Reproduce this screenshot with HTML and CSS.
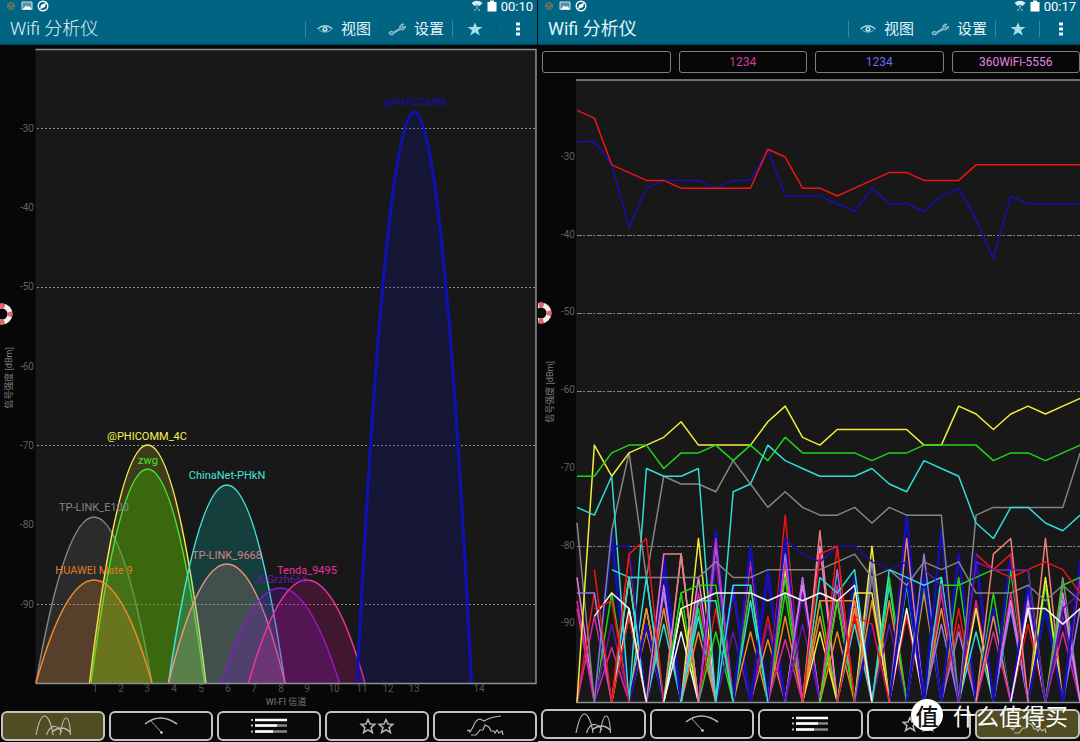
FILE: index.html
```html
<!DOCTYPE html>
<html lang="zh-CN">
<head>
<meta charset="utf-8">
<title>Wifi 分析仪</title>
<link rel="stylesheet" href="styles.css">
</head>
<body>
<svg class="defs" aria-hidden="true">
  <symbol id="i-ring" viewBox="0 0 12 12"><circle cx="6" cy="6" r="3.500" fill="#3c5f5c" stroke="#6d8278"/><path d="M3.500 5.500Q6 8.500 8.500 5.500" fill="none" stroke="#8f9a84"/></symbol>
  <symbol id="i-pic" viewBox="0 0 12 12"><path d="M1 2h10v7.500H1z" fill="#5d8ea5" stroke="#c5e2ec"/><path d="M2 9l3-3.500 2 1.500 1.500-1L10.500 9z" fill="#fff"/></symbol>
  <symbol id="i-nav" viewBox="0 0 12 12"><circle cx="6" cy="6" r="4.800" fill="none" stroke="#fff" stroke-width="1.400"/><path d="M9.300 2.600L8 7 3 9.200 4 5z" fill="#fff"/></symbol>
  <symbol id="i-wifi" viewBox="0 0 12 12"><path d="M.5 3Q6-1.500 11.500 3L8.500 6 6 4.500 3.500 6z" fill="#d8eef5"/><path d="M6 5v4M4 9v2M8 9v2" stroke="#b5d6e2"/></symbol>
  <symbol id="i-bat" viewBox="0 0 10 12"><path d="M3 .5h4v1.500h2.500v9.500h-9V2H3z" fill="#fff"/></symbol>
  <symbol id="i-eye" viewBox="0 0 16 12"><path d="M.5 6Q8-.5 15.500 6" fill="none" stroke="#a9d2df" stroke-width="1.300"/><path d="M2 7Q8 11.500 14 7" fill="none" stroke="#7cb0c0"/><circle cx="8" cy="6.300" r="2.500" fill="#c5e4ee"/><circle cx="8" cy="6" r="1" fill="#0a5068"/></symbol>
  <symbol id="i-wrench" viewBox="0 0 20 14"><path d="M2 12.500L1 10.500 3.500 9 6 10 13.500 5.500 13 3 15.500 1 17.500 1 15.500 3 16.500 5 19.500 3.500 19 5.500 16.500 7.500 13.500 7 6.500 11.200 5.500 13z" fill="#4f8b9d" stroke="#b9dde8" stroke-width=".9"/></symbol>
  <symbol id="i-star" viewBox="0 0 16 14"><path d="M8 .5l2 4.500h5.500L11 8.300l1.800 5.200L8 10.500l-4.800 3L5 8.300.5 5H6z" fill="#a9dcea"/></symbol>
  <symbol id="i-dots" viewBox="0 0 4 14"><path d="M0 .5h4v3H0zM0 5.500h4v3H0zM0 10.500h4v3H0z" fill="#f2fbff"/></symbol>
  <symbol id="i-graph" viewBox="0 0 38 22"><path d="M2 20C5 5 8 1 10.500 1S17 6 19 20M12.500 20C15 13 18 11 21 11.500S27 15 28 17M26 20C28 8 30 3 32 3S36 8 36.500 20M18 17Q28 9 36 17"/></symbol>
  <symbol id="i-meter" viewBox="0 0 38 22"><path d="M3 9Q18-3 35 9" stroke-width="1.600"/><path d="M9 6L19 17" stroke-width=".9"/><circle cx="19.500" cy="17.500" r="1.300" fill="#ddd" stroke="none"/></symbol>
  <symbol id="i-list" viewBox="0 0 38 22"><path d="M1 5h2M1 10.500h2M1 16.500h2" stroke-width="2"/><path d="M5 10.500h32M5 16.500h32" stroke="#888" stroke-width="2.400"/><path d="M5 5h32M5 10.500h22M5 16.500h18" stroke="#fff" stroke-width="2.400"/></symbol>
  <symbol id="i-stars" viewBox="0 0 38 22"><path d="M10 4.500l2 4.500 4.800.3-3.800 3.300 1.500 4.900-4.500-2.700-4.500 2.700L7 12.600 3.200 9.300 8 9zM28 4.500l2 4.500 4.800.3-3.800 3.300 1.500 4.900-4.500-2.700-4.500 2.700 1.500-4.900-3.800-3.300L26 9z" stroke-width="1.500"/></symbol>
  <symbol id="i-time" viewBox="0 0 38 22"><path d="M1 16l2-1 1 2 3-5q3-8 7-8l4 2q6-4 17-5"/><path d="M5 20h5l4-5 3 0 2-5 4 2 2 4h3l1 2 2-3 2 3 3-2 1 4"/></symbol>
  <symbol id="i-buoy" viewBox="0 0 24 24"><circle cx="12" cy="12" r="8" fill="none" stroke="#f6eeee" stroke-width="5"/><circle cx="12" cy="12" r="8" fill="none" stroke="#e2646e" stroke-width="5" stroke-dasharray="5 7.560" stroke-dashoffset="2.500"/></symbol>
</svg>

<main class="screens">
  <section class="phone">
    <header class="top">
      <div class="status">
        <svg class="s-icon"><use href="#i-ring"/></svg><svg class="s-icon"><use href="#i-pic"/></svg><svg class="s-icon"><use href="#i-nav"/></svg>
        <span class="grow"></span>
        <svg class="s-icon"><use href="#i-wifi"/></svg><svg class="s-bat"><use href="#i-bat"/></svg><time>00:10</time>
      </div>
      <div class="bar">
        <h1>Wifi 分析仪</h1>
        <button class="act view"><svg class="eye"><use href="#i-eye"/></svg>视图</button>
        <button class="act faint"><svg class="wrench"><use href="#i-wrench"/></svg>设置</button>
        <button class="act fav" aria-label="收藏"><svg class="star"><use href="#i-star"/></svg></button>
        <button class="act faint more" aria-label="更多"><svg class="dots"><use href="#i-dots"/></svg></button>
      </div>
    </header>
    <svg class="chart" viewBox="0 45 537 665" role="img" aria-label="Wi-Fi 信道图">
      <rect x="35.500" y="49" width="500.500" height="634.500" fill="#181818"/>
      <g class="grid">
        <path d="M37 128.500H535M37 287.500H535M37 445.500H535M37 604.500H535"/>
      </g>
      <g class="curves">
        <path stroke="#858585" fill="#8585852e" d="M36 683Q94 351 152 683"/>
        <path stroke="#f6f050" fill="#e8e03030" d="M89.500 683Q147.500 207 206 683"/>
        <path stroke="#42ea2c" fill="#36a00070" d="M91 683Q147.500 255 204.500 683"/>
        <path stroke="#f08a2c" fill="#f08a2c38" d="M36 683Q94 477 152 683"/>
        <path stroke="#48e2dc" fill="#0cc8c438" d="M168.500 683Q227 287 285 683"/>
        <path stroke="#f09088" fill="#e0908838" d="M168.500 683Q227 445 285 683"/>
        <path stroke="#861cc8" fill="#7a10d040" d="M221.500 683Q280 493 339.500 683"/>
        <path stroke="#f0349c" fill="#d0148838" d="M248.500 683Q307 477 365 683"/>
        <path stroke="#1010b8" stroke-width="3" fill="#1010c030" d="M357 683Q414.500-459 471.500 683"/>
      </g>
      <path class="frame" d="M35.500 49.500H536V683.500H35.500"/>
      <g class="names">
        <text x="147" y="440" fill="#f6f050">@PHICOMM_4C</text>
        <text x="148" y="464" fill="#42ea2c">zwg</text>
        <text x="94" y="511" fill="#858585">TP-LINK_E100</text>
        <text x="94" y="574" fill="#e07c20">HUAWEI Mate 9</text>
        <text x="227" y="479" fill="#48e2dc">ChinaNet-PHkN</text>
        <text x="227" y="559" fill="#d88480">TP-LINK_9668</text>
        <text x="281" y="583" fill="#6518b0">JCGrzh666</text>
        <text x="307" y="574" fill="#e8349c">Tenda_9495</text>
        <text x="415" y="106" fill="#1212a8">@PHICOMM</text>
      </g>
      <g class="ticks end">
        <text x="34" y="132">-30</text><text x="34" y="211">-40</text><text x="34" y="290">-50</text><text x="34" y="370">-60</text><text x="34" y="449">-70</text><text x="34" y="528">-80</text><text x="34" y="608">-90</text>
      </g>
      <g class="ticks">
        <text x="95" y="692">1</text><text x="121" y="692">2</text><text x="147" y="692">3</text><text x="174" y="692">4</text><text x="201" y="692">5</text><text x="228" y="692">6</text><text x="254" y="692">7</text><text x="281" y="692">8</text><text x="307" y="692">9</text><text x="334" y="692">10</text><text x="362" y="692">11</text><text x="388" y="692">12</text><text x="414" y="692">13</text><text x="479" y="692">14</text>
        <text x="286" y="705" class="lit">WI-FI 信道</text>
        <text transform="translate(12 378) rotate(-90)" class="lit">信号强度 [dBm]</text>
      </g>
      <use href="#i-buoy" x="-10" y="302" width="24" height="24"/>
    </svg>
    <nav class="tabs">
      <button class="tab on" aria-label="信道图"><svg><use href="#i-graph"/></svg></button>
      <button class="tab" aria-label="信号计"><svg><use href="#i-meter"/></svg></button>
      <button class="tab" aria-label="列表"><svg><use href="#i-list"/></svg></button>
      <button class="tab" aria-label="评分"><svg><use href="#i-stars"/></svg></button>
      <button class="tab" aria-label="时间图"><svg><use href="#i-time"/></svg></button>
    </nav>
  </section>

  <section class="phone second">
    <header class="top">
      <div class="status">
        <svg class="s-icon"><use href="#i-ring"/></svg><svg class="s-icon"><use href="#i-pic"/></svg><svg class="s-icon"><use href="#i-nav"/></svg>
        <span class="grow"></span>
        <svg class="s-icon"><use href="#i-wifi"/></svg><svg class="s-bat"><use href="#i-bat"/></svg><time>00:17</time>
      </div>
      <div class="bar">
        <h1>Wifi 分析仪</h1>
        <button class="act view"><svg class="eye"><use href="#i-eye"/></svg>视图</button>
        <button class="act none"><svg class="wrench"><use href="#i-wrench"/></svg>设置</button>
        <button class="act fav" aria-label="收藏"><svg class="star"><use href="#i-star"/></svg></button>
        <button class="act more" aria-label="更多"><svg class="dots"><use href="#i-dots"/></svg></button>
      </div>
    </header>
    <div class="legend">
      <button class="chip" aria-label="空"></button>
      <button class="chip magenta">1234</button>
      <button class="chip blue">1234</button>
      <button class="chip pink">360WiFi-5556</button>
    </div>
    <svg class="chart" viewBox="538 78 542 630" role="img" aria-label="信号时间图">
      <rect x="576" y="80" width="504" height="622" fill="#181818"/>
      <g class="grid dense">
        <path d="M577 235.500H1080M577 313.500H1080M577 391.500H1080M577 546.500H1080"/>
      </g>
      <g id="lines" class="lines"></g>
      <path class="frame" d="M576 80H1080M576 702.500H1080"/>
      <g class="ticks end">
        <text x="575" y="160">-30</text><text x="575" y="238">-40</text><text x="575" y="315">-50</text><text x="575" y="393">-60</text><text x="575" y="471">-70</text><text x="575" y="549">-80</text><text x="575" y="626">-90</text>
      </g>
      <g class="ticks"><text transform="translate(553 392) rotate(-90)" class="lit">信号强度 [dBm]</text></g>
      <use href="#i-buoy" x="529" y="301" width="24" height="24"/>
    </svg>
    <nav class="tabs">
      <button class="tab" aria-label="信道图"><svg><use href="#i-graph"/></svg></button>
      <button class="tab" aria-label="信号计"><svg><use href="#i-meter"/></svg></button>
      <button class="tab" aria-label="列表"><svg><use href="#i-list"/></svg></button>
      <button class="tab" aria-label="评分"><svg><use href="#i-stars"/></svg></button>
      <button class="tab on" aria-label="时间图"><svg><use href="#i-time"/></svg></button>
    </nav>
    <div class="mark"><span class="seal">值</span><span>什么值得买</span></div>
  </section>
</main>
<script src="lines.js"></script>
</body>
</html>
```
FILE: styles.css
```css
* { box-sizing: border-box; }
body {
  margin: 0;
  background: #070707;
  font-family: Roboto, "Noto Sans CJK SC", sans-serif;
}
.defs { position: absolute; width: 0; height: 0; }
.screens {
  display: grid;
  grid-template-columns: 537fr 542fr;
  gap: 1px;
}
.phone {
  position: relative;
  display: flex;
  flex-direction: column;
  min-width: 0;
  overflow: hidden;
}
.second { border-bottom: 1px solid #d8d0d0; }
button {
  margin: 0;
  padding: 0;
  border: 0;
  background: none;
  color: inherit;
  font: inherit;
}

.top {
  height: 45px;
  background: linear-gradient(#006482 94%, #004a62);
  color: #e2f4fa;
}
.status {
  display: flex;
  align-items: flex-start;
  gap: 4px;
  height: 13px;
  padding: 0 4px 0 5px;
}
.s-icon { width: 12px; height: 12px; }
.s-bat { width: 10px; height: 12px; }
.grow { flex: 1; }
time { font-size: 13px; line-height: 15px; margin-top: -1px; color: #fff; }
.bar {
  display: flex;
  align-items: center;
  height: 32px;
  padding-left: 10px;
}
h1 {
  flex: 1;
  margin: 0;
  font-size: 18px;
  font-weight: 300;
  line-height: 24px;
}
.second h1 { font-weight: 400; }
.act {
  display: flex;
  align-items: center;
  gap: 8px;
  height: 16px;
  padding: 0 8px 0 7px;
  border-left: 1px solid #3a88a0;
  font-size: 15px;
  line-height: 16px;
}
.view { padding: 0 9px 0 11px; }
.faint { border-color: #0d566e; }
.none { border-color: transparent; }
.fav { padding: 0 13px 0 14px; }
.more { padding: 0 17px 0 19px; }
.eye { width: 16px; height: 12px; }
.wrench { width: 18px; height: 13px; }
.star { width: 16px; height: 14px; }
.dots { width: 4px; height: 14px; }

.chart { display: block; width: 100%; height: auto; overflow: hidden; }
.grid { stroke: #8a8a8a; stroke-width: 1; stroke-dasharray: 2 2; }
.dense { stroke-dasharray: 5 1 2 2; stroke: #808080; }
.curves path { stroke-linejoin: round; }
.curves { stroke-width: 1.5px; }
.frame { fill: none; stroke: #8c908e; stroke-width: 1.5px; }
.names { font-size: 11px; text-anchor: middle; }
.ticks { font-size: 10px; fill: #555; text-anchor: middle; }
.end { text-anchor: end; fill: #626262; }
.lit { font-size: 9px; fill: #7c7c7c; }
.lines { fill: none; stroke-width: 1.5px; stroke-linejoin: round; }
.lines .wide { stroke-width: 2.5px; }

.legend {
  display: grid;
  grid-template-columns: repeat(4, 1fr);
  gap: 8px;
  padding: 6px 0 5px 4px;
}
.chip {
  height: 22px;
  border: 1px solid #7e7e7e;
  border-radius: 3px;
  font-size: 12px;
  line-height: 20px;
}
.magenta { color: #d23aa0; }
.blue { color: #6c6cf0; }
.pink { color: #e684e0; }

.tabs {
  display: grid;
  grid-template-columns: repeat(5, 1fr);
  gap: 4px;
  padding: 1px 0 1px 1px;
}
.second .tabs { padding: 1px 0 1px 3px; }
.tab {
  display: flex;
  align-items: center;
  justify-content: center;
  height: 30px;
  border: 2px solid #c4c2c2;
  border-radius: 6px;
  background: #090909;
}
.on { background: #504d22; }
.tab svg {
  width: 38px;
  height: 22px;
  fill: none;
  stroke: #b8b8b0;
  stroke-width: 1.2px;
}
.mark {
  position: absolute;
  right: 12px;
  bottom: 10px;
  display: flex;
  align-items: center;
  gap: 10px;
  color: #fff;
  font-family: "Noto Sans CJK SC", sans-serif;
  font-size: 23px;
  line-height: 32px;
  font-weight: 400;
}
.seal {
  width: 32px;
  border-radius: 50%;
  background: #fff;
  color: #111;
  text-align: center;
  font-weight: 500;
}
```
FILE: lines.js
```js
const FLOOR = 100;
const colors = {
  r: '#f01414', b: '#1410b4', y: '#f2ee3c', g: '#20d418', c: '#30dcd8',
  a: '#858585', w: '#f6f6f6', m: '#d828a0', p: '#f07ce0', s: '#f08078',
  o: '#f08828', v: '#8c7cf0', u: '#6414b4'
};

// [colour, first sample, levels in -dBm]
const series = [
  ['b', 0, '28 28 31 39 34 33 33 33 34 33 33 29 35 35 35 36 37 34 36 36 37 35 34 38 43 35 36 36 36 36'],
  ['r', 0, '24 25 31 32 33 33 34 34 34 34 34 29 30 34 34 35 34 33 32 32 33 33 33 31 31 31 31 31 31 31'],
  ['a', 0, '77 100 78 68 84 71 72 72 73 69 72 75 73 75 76 76 75 77 75 76 76 76 100 76 75 75 75 75 75 68'],
  ['y', 0, '100 67 71 68 67 66 64 67 67 67 67 64 62 66 67 65 65 65 65 65 67 67 62 63 65 63 62 63 62 61'],
  ['g', 0, '71 71 68 67 67 70 68 68 67 69 67 69 66 68 68 68 68 69 68 68 67 67 67 67 69 68 68 69 68 67'],
  ['c', 0, '75 76 71 100 70 71 71 70 100 73 72 67 69 70 71 71 71 70 72 73 69 70 71 77 79 75 75 77 78 76'],
  ['a', 3, '84 84 84 84 84 82 84 84 83 83 83 83 82 81 84 83 85 82 83 82 86 86 86 85 87 85 87'],
  ['b', 2, '80 80 100'],
  ['b', 11, '100 79 81 82 80 80 82 83 82 100'],
  ['c', 2, '83 84 84 100'],
  ['v', 0, '86 86 100'],
  ['s', 4, '100 81 81 100'],
  ['c', 8, '100 85 85 100'],
  ['g', 5, '100 86 85 85 100'],
  ['c', 6, '100 87 87 100'],
  ['c', 13, '100 84 86 83 100 83 84 85 84 100'],
  ['y', 15, '100 86 86 100'],
  ['o', 13, '100 87 87 87 100'],
  ['r', 13, '100 81 80 100'],
  ['r', 15, '100 89 90 100'],
  ['r', 2, '100 81 79 100'],
  ['g', 21, '85 85 84 83 83 83 100 85 84 83'],
  ['r', 23, '82 83 84 83 82 83 86'],
  ['r', 23, '81 83 81 100'],
  ['s', 23, '100 81 79 100'],
  ['u', 20, '83 85 100 82 83 83 83 100 88 86'],
  ['w', 5, '100 88 87 86 86 86 87 86 87 86 87 85 100'],
  ['w', 1, '89 86 88 100'],
  ['w', 25, '100 88 88 90 88'],
  ['r', 1, '83 100'],
  ['r', 1, '88 87 100']
];

// levels seen at each sample by stations that fade in and out
const bursts = [
  'p84 m87 m88', 'r86 m89', 'g86 u90 m93 b78 b79', 'r81 y84 c84 g89 w88 r89', 'c84 y88 o88 o91 b90',
  'b81 m86 o88 c90 v86 p85 b83', 'v81 s81 g86 y88 w91', 'y79 m86 g88 c89 o91 p84', 'b78 u82 r88 g91 v80 m79',
  'c85 u86 u91 b85', 'm82 r85 o91 c87 g85 b80', 'r89 o92 u90 b83 b84', 'r76 b79 y83 g84 g86 o89 m92 v81 m82',
  'm84 v84 p85 u86 u90', 's78 p80 g87 o89 y91', 'r80 v83 m85 o91 y87 g87', 'm87 o88 r89 c90 b84', 'v82 y80 o87 b90 a84',
  'c85 o87 u90 g84', 'b76 c85 r89 w88 s79 b84', 'u84 o86 g85 v81 b84', 'm86 o88 r85 v90 c84 b78', 'r88 r90 v91 g84 b81',
  'u82 m87 c91 y88 b81', 'g86 b88 o89 m91', 'g83 m86 p87 v88 b81', 'r90 v86 p87 w88 b85', 's79 m88 g85 y84 b88',
  'm91 u89 v87 a84 p86', 'u88 m84 v88 b82'
];

const x = i => 577 + i * 17.35;
const y = db => db * 7.785 - 76.5;
const group = document.getElementById('lines');

function draw(color, points, wide) {
  const line = document.createElementNS('http://www.w3.org/2000/svg', 'polyline');
  line.setAttribute('stroke', colors[color]);
  if (wide) line.setAttribute('class', 'wide');
  line.setAttribute('points', points.map(([i, db]) => x(i) + ',' + y(db)).join(' '));
  group.append(line);
}

bursts.forEach((list, i) => list.split(' ').forEach(item => {
  const tent = [[i - 1, FLOOR], [i, +item.slice(1)], [i + 1, FLOOR]];
  draw(item[0], tent.filter(p => p[0] >= 0), item[0] === 'b');
}));
series.forEach(([color, start, levels]) => {
  draw(color, levels.split(' ').map((db, k) => [start + k, +db]));
});
```
